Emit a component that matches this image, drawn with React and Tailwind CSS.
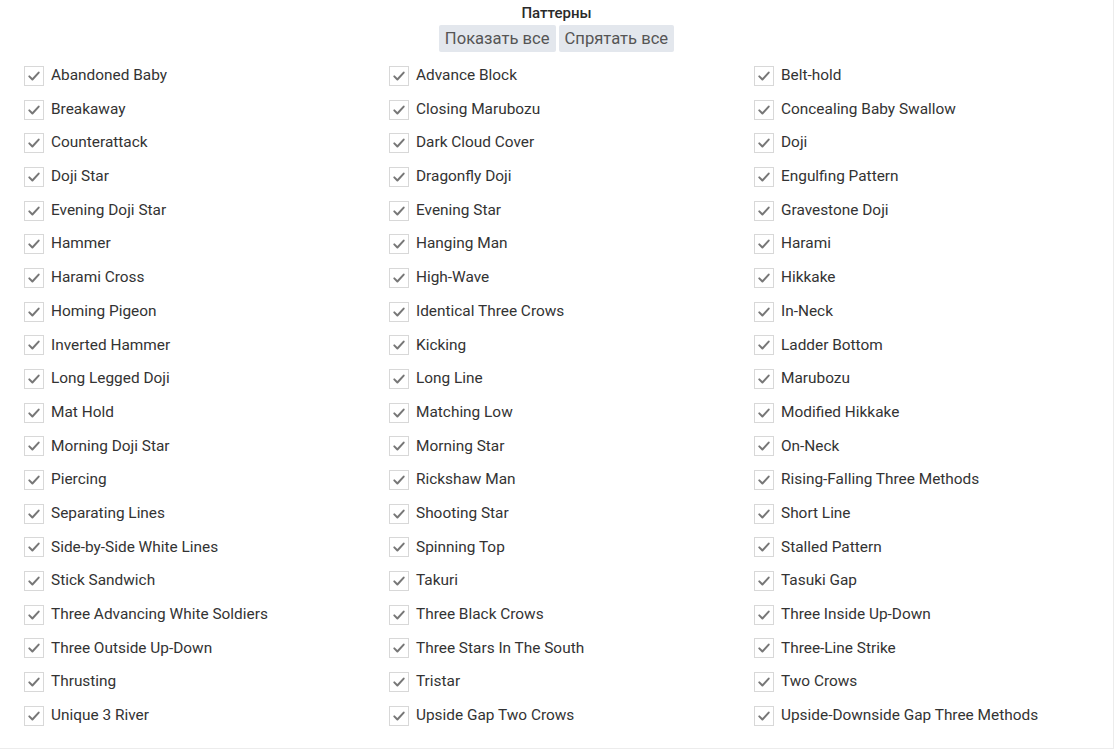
import React from "react";

const items = [
  "Abandoned Baby","Advance Block","Belt-hold",
  "Breakaway","Closing Marubozu","Concealing Baby Swallow",
  "Counterattack","Dark Cloud Cover","Doji",
  "Doji Star","Dragonfly Doji","Engulfing Pattern",
  "Evening Doji Star","Evening Star","Gravestone Doji",
  "Hammer","Hanging Man","Harami",
  "Harami Cross","High-Wave","Hikkake",
  "Homing Pigeon","Identical Three Crows","In-Neck",
  "Inverted Hammer","Kicking","Ladder Bottom",
  "Long Legged Doji","Long Line","Marubozu",
  "Mat Hold","Matching Low","Modified Hikkake",
  "Morning Doji Star","Morning Star","On-Neck",
  "Piercing","Rickshaw Man","Rising-Falling Three Methods",
  "Separating Lines","Shooting Star","Short Line",
  "Side-by-Side White Lines","Spinning Top","Stalled Pattern",
  "Stick Sandwich","Takuri","Tasuki Gap",
  "Three Advancing White Soldiers","Three Black Crows","Three Inside Up-Down",
  "Three Outside Up-Down","Three Stars In The South","Three-Line Strike",
  "Thrusting","Tristar","Two Crows",
  "Unique 3 River","Upside Gap Two Crows","Upside-Downside Gap Three Methods",
];

function Check() {
  return (
    <span className="w-[20px] h-[20px] border border-[#d8d8d8] bg-white flex items-center justify-center shrink-0">
      <svg width="14" height="14" viewBox="0 0 14 14" fill="none">
        <path d="M2.3 7.4 L5.4 10.5 L11.7 3.6" stroke="#777" strokeWidth="2" strokeLinecap="round" strokeLinejoin="round" />
      </svg>
    </span>
  );
}

export default function App() {
  return (
    <div className="w-[1114px] h-[749px] bg-white border-r border-b border-[#ececec] text-[#333]" style={{ fontFamily: "Roboto, 'Liberation Sans', sans-serif" }}>
      <div className="pt-[4px] flex flex-col items-center">
        <div className="text-[15px] font-medium leading-[18px] text-[#2a2a2a]">Паттерны</div>
        <div className="flex gap-[3px] mt-[3px]">
          <button className="h-[27px] px-[6px] bg-[#e3e7ed] text-[#555] text-[16.6px] leading-[27px] rounded-[2px]">Показать все</button>
          <button className="h-[27px] px-[6px] bg-[#e3e7ed] text-[#555] text-[16.6px] leading-[27px] rounded-[2px]">Спрятать все</button>
        </div>
      </div>
      <div className="grid grid-cols-[365px_365px_365px] pl-[24px] mt-[7px]">
        {items.map((t) => (
          <div key={t} className="h-[33.68px] flex items-center gap-[7px]">
            <Check />
            <span className="text-[15.4px] text-[#333] leading-none">{t}</span>
          </div>
        ))}
      </div>
    </div>
  );
}
